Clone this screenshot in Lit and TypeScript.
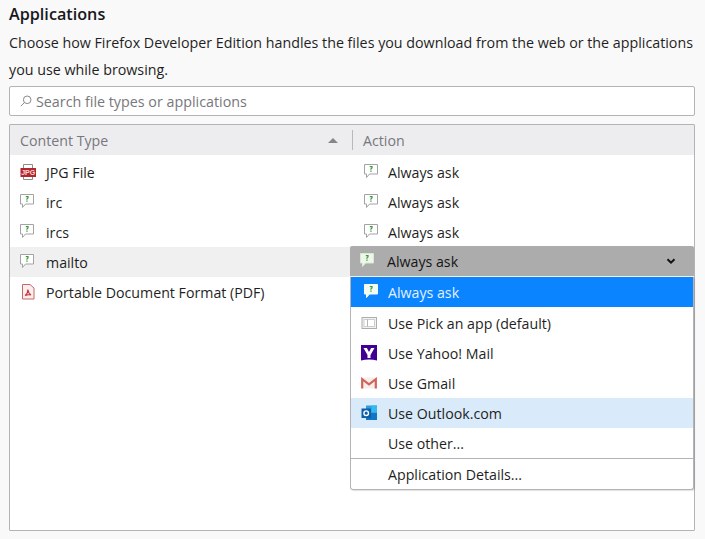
import { LitElement, html, css, svg } from "lit";
import { customElement } from "lit/decorators.js";

const ask = (fill = "#fff", line = "#a3a3a3") => html`<svg class="ic" viewBox="0 0 16 16" width="16" height="16">
  <path d="M.5.5h13v9.500H5.500L2.500 13.500v-3.500H.5z" fill="${fill}" stroke="${line}" stroke-width="1"/>
  <path d="M5.800 2.600h2.200v1.300L6.900 4.900v.800" fill="none" stroke="#3c9a3c" stroke-width="1.200"/>
  <rect x="6.300" y="6.500" width="1.300" height="1.300" fill="#3c9a3c"/>
</svg>`;

const jpg = html`<svg class="ic" viewBox="0 0 16 16" width="16" height="16">
  <path d="M3.500.5h9v15h-9z" fill="#fff" stroke="#8c8c8c"/>
  <rect x="0.500" y="4" width="15.500" height="9" fill="#b3262b"/>
  <text x="8.200" y="11" text-anchor="middle" font-family="Liberation Sans" font-size="7" font-weight="700" fill="#f6dede">JPG</text>
</svg>`;

const pdf = html`<svg class="ic" viewBox="0 0 16 16" width="16" height="16">
  <path d="M2.500.5h7.500l4 3.500v11h-11.500z" fill="#fbeeee" stroke="#cc6468"/>
  <path d="M5 11.500c1.800-1 2.800-3.500 2.800-6 .500 2.700 1.500 4.500 3.200 5.300-2-.300-4.200-.100-6 .700z" fill="#fff" stroke="#c8353b" stroke-width="1.200"/>
</svg>`;

const app = html`<svg class="ic" viewBox="0 0 16 16" width="16" height="16">
  <rect x="1" y="2.500" width="14.500" height="11" fill="#f1f1f1" stroke="#adadad"/>
  <rect x="3" y="4.500" width="10.500" height="7" fill="#fff" stroke="#cfcfcf"/>
  <path d="M6.500 4.500v7" stroke="#b5b5b5"/>
</svg>`;

const yahoo = html`<svg class="ic" viewBox="0 0 16 16" width="16" height="16">
  <path d="M0 0h16v15.500c-5-1.500-11-1.500-16 0z" fill="#410093"/>
  <path d="M2.500 3h3.400L8 7l2.100-4h3.400L9.500 10v3h-3v-3z" fill="#fff"/>
</svg>`;

const gmail = html`<svg class="ic" viewBox="0 0 16 16" width="16" height="16">
  <path d="M0 2.500h16v11H0z" fill="#f5efec"/>
  <path d="M1.200 13.500V4.200L8 9.300l6.800-5.100v9.300" fill="none" stroke="#d2635a" stroke-width="2.200"/>
</svg>`;

const outlook = html`<svg class="ic" viewBox="0 0 16 16" width="16" height="16">
  <rect x="5" y="0.500" width="11" height="14" fill="#2f9fe0"/>
  <rect x="10.500" y="0.500" width="5.500" height="7" fill="#35b8ee"/>
  <rect x="5" y="8" width="11" height="7" fill="#1276c4"/>
  <rect x="0.500" y="3.500" width="9.500" height="9.500" fill="#0b5ea8"/>
  <circle cx="5.200" cy="8.200" r="2.300" fill="none" stroke="#fff" stroke-width="1.400"/>
</svg>`;

const rows = [
  { icon: jpg, name: "JPG File" },
  { icon: ask(), name: "irc" },
  { icon: ask(), name: "ircs" },
  { icon: ask(), name: "mailto", hover: true },
  { icon: pdf, name: "Portable Document Format (PDF)", noAction: true },
];

const menu = [
  { icon: app, label: "Use Pick an app (default)" },
  { icon: yahoo, label: "Use Yahoo! Mail" },
  { icon: gmail, label: "Use Gmail" },
  { icon: outlook, label: "Use Outlook.com", hl: true },
  { icon: null, label: "Use other..." },
];

@customElement("app-root")
export class AppRoot extends LitElement {
  static styles = css`
    :host {
      display: block;
      width: 705px;
      height: 539px;
      overflow: hidden;
      background: #f9f9fa;
      font-family: "Open Sans", "Noto Sans", sans-serif;
      font-size: 14.200px;
      color: #1f1f23;
    }
    .page { padding: 4px 10px 0 9px; }
    h1 {
      margin: 0;
      font-size: 16.200px;
      line-height: 21px;
      font-weight: 600;
      color: #17171a;
    }
    p {
      margin: 4px 0 0;
      line-height: 27px;
      font-size: 14.270px;
    }
    .search {
      display: flex;
      align-items: center;
      gap: 4px;
      height: 28px;
      margin-top: 3px;
      padding-left: 10px;
      background: #fff;
      border: 1px solid #b4b4b8;
      border-radius: 2px;
      color: #77777c;
      font-size: 14.300px;
    }
    .table {
      position: relative;
      margin-top: 8px;
      height: 405px;
      background: #fff;
      border: 1px solid #b4b4b8;
      border-radius: 1px;
    }
    .head {
      display: grid;
      grid-template-columns: 342px 1fr;
      height: 30px;
      align-items: center;
      background: #ededf0;
      color: #77777c;
    }
    .head > div { display: flex; align-items: center; height: 20px; }
    .c1 { padding: 0 14px 0 10px; justify-content: space-between; }
    .c2 { padding-left: 10px; border-left: 1px solid #b9b9bc; }
    .arrow { width: 0; height: 0; border: 5px solid transparent; border-top: 0; border-bottom: 5px solid #85858a; }
    .rows { padding-top: 2px; }
    .row {
      display: grid;
      grid-template-columns: 340px 1fr;
      height: 30px;
      align-items: center;
    }
    .row.hover { background: #f0f0f1; }
    .cell { display: flex; align-items: center; gap: 10px; padding-left: 10px; }
    .cell.act { padding-left: 14px; gap: 8px; }
    .ic { flex: none; display: block; }
    .popup {
      position: absolute;
      left: 340px;
      top: 121px;
      width: 344px;
      box-sizing: border-box;
    }
    .selected {
      display: flex;
      align-items: center;
      height: 30px;
      padding: 0 17px 0 10px;
      gap: 11px;
      background: #acacac;
      border-radius: 2px 2px 0 0;
      color: #141416;
    }
    .selected .t { flex: 1; }
    .list {
      background: #fff;
      border: 1px solid #b4b4b8;
      border-top: 0;
      border-radius: 0 0 3px 3px;
      box-shadow: 1px 1px 1px rgba(0,0,0,.12);
    }
    .mi {
      display: flex;
      align-items: center;
      gap: 11px;
      height: 30px;
      padding-left: 10px;
    }
    .mi .sp { width: 16px; flex: none; }
    .mi.sel {
      background: #0a84ff;
      color: #e2f1ff;
      height: 30px;
      padding-left: 13px;
      gap: 8px;
      margin-top: 1px;
      margin-bottom: 1px;
    }
    .mi.hl { background: #d9ebfb; }
    .sep { height: 1px; background: #b4b4b8; }
  `;

  render() {
    return html`<div class="page">
      <h1>Applications</h1>
      <p>Choose how Firefox Developer Edition handles the files you download from the web or the applications<br />you use while browsing.</p>
      <div class="search">
        <svg viewBox="0 0 12 12" width="12" height="12"><circle cx="7.200" cy="4.800" r="3.800" fill="none" stroke="#8a8a8e" stroke-width="1"/><path d="M4.400 7.600L.8 11.200" stroke="#8a8a8e" stroke-width="1"/></svg>
        <span>Search file types or applications</span>
      </div>
      <div class="table">
        <div class="head">
          <div class="c1"><span>Content Type</span><i class="arrow"></i></div>
          <div class="c2">Action</div>
        </div>
        <div class="rows">
          ${rows.map((r) => html`<div class="row ${r.hover ? "hover" : ""}">
            <div class="cell">${r.icon}<span>${r.name}</span></div>
            ${r.noAction || r.hover ? html`<div></div>` : html`<div class="cell act">${ask()}<span>Always ask</span></div>`}
          </div>`)}
        </div>
        <div class="popup">
          <div class="selected">${ask("#eef7ea", "#d8e8d2")}<span class="t">Always ask</span>
            <svg viewBox="0 0 12 12" width="12" height="12">${svg`<path d="M2.500 4.200L6 7.700l3.500-3.500" fill="none" stroke="#111" stroke-width="2"/>`}</svg>
          </div>
          <div class="list">
            <div class="mi sel">${ask("#f2fbf0", "#f2fbf0")}<span>Always ask</span></div>
            ${menu.map((m) => html`<div class="mi ${m.hl ? "hl" : ""}">${m.icon ?? html`<span class="sp"></span>`}<span>${m.label}</span></div>`)}
            <div class="sep"></div>
            <div class="mi"><span class="sp"></span><span>Application Details...</span></div>
          </div>
        </div>
      </div>
    </div>`;
  }
}
